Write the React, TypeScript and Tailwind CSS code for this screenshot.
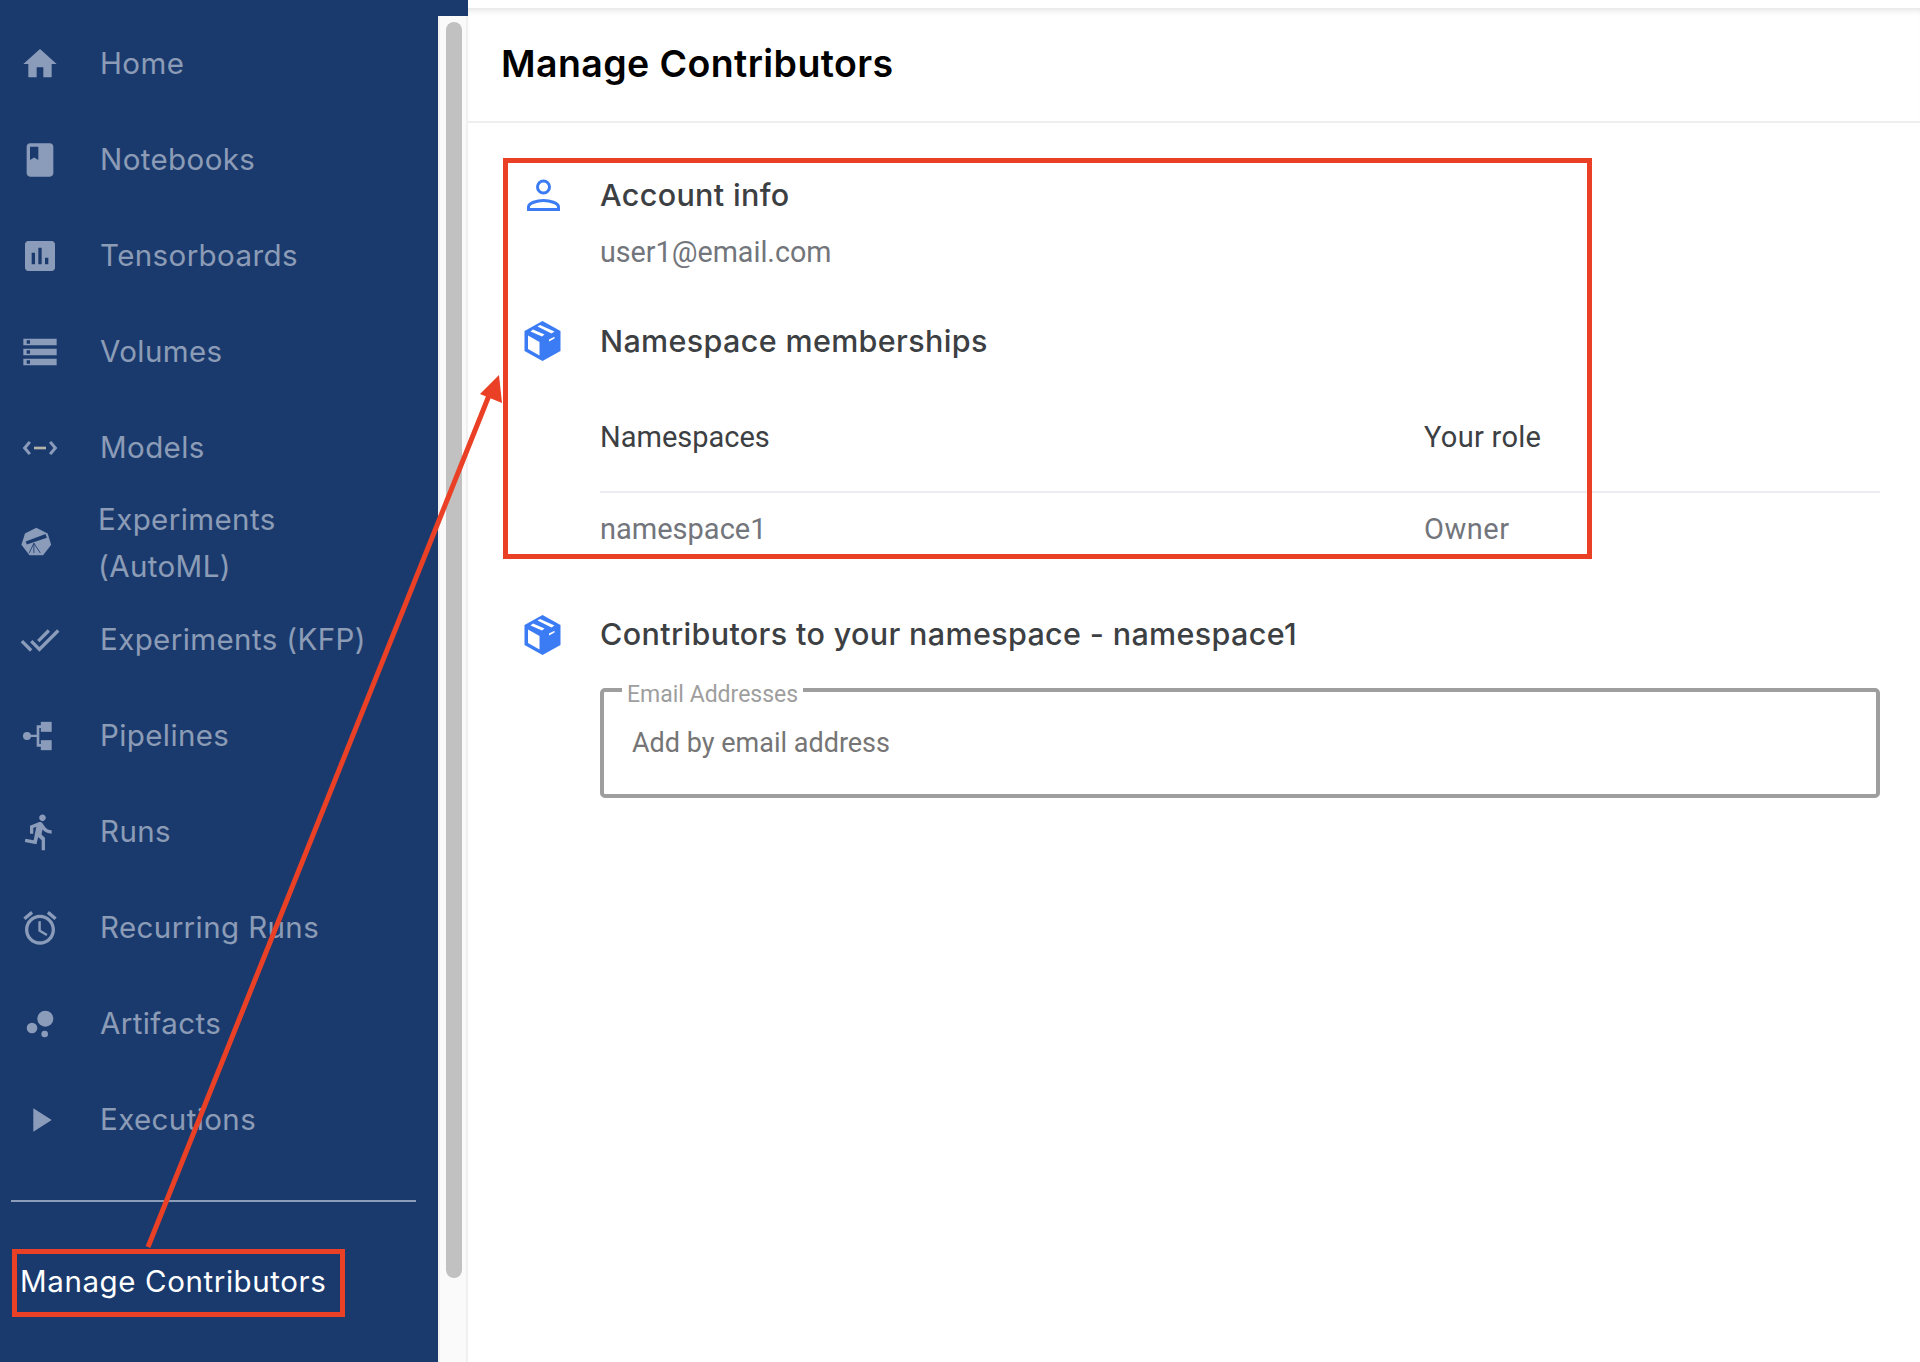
import type { ReactNode } from 'react';

const navItems: { label: ReactNode; icon: ReactNode; shift?: boolean }[] = [
  { label: 'Home', icon: <path d="M10 20v-6h4v6h5v-8h3L12 3 2 12h3v8z" /> },
  { label: 'Notebooks', icon: <path d="M18 2H6c-1.1 0-2 .9-2 2v16c0 1.1.9 2 2 2h12c1.1 0 2-.9 2-2V4c0-1.1-.9-2-2-2zM6 4h5v8l-2.5-1.5L6 12V4z" /> },
  { label: 'Tensorboards', icon: <path d="M19 3H5c-1.1 0-2 .9-2 2v14c0 1.1.9 2 2 2h14c1.1 0 2-.9 2-2V5c0-1.1-.9-2-2-2zM9 17H7v-7h2v7zm4 0h-2V7h2v10zm4 0h-2v-4h2v4z" /> },
  { label: 'Volumes', icon: <path d="M2 20h20v-4H2v4zm2-3h2v2H4v-2zM2 4v4h20V4H2zm4 3H4V5h2v2zm-4 7h20v-4H2v4zm2-3h2v2H4v-2z" /> },
  {
    label: 'Models',
    icon: (
      <>
        <path d="M6.6 8.8 5.2 7.8 1.6 12l3.6 4.2 1.4-1L4 12z" />
        <path d="M17.4 8.8l1.4-1 3.6 4.2-3.6 4.2-1.4-1L20 12z" />
        <rect x="8.4" y="11.2" width="7.2" height="1.6" fill="#b3b3a8" />
      </>
    ),
  },
  {
    label: (
      <>
        Experiments
        <br />
        (AutoML)
      </>
    ),
    shift: true,
    icon: (
      <>
        <path d="M11.5.5 19.5 4.5 22 12.5 16.3 20H6.7L1 12.5 3.5 4.5z" />
        <path d="M4 10.3 18 5l1 2.6L4.8 12.3z" fill="#1a3a6e" />
        <path d="M9.8 11.5v6.8M9.8 11.5 6.5 18.3M9.8 11.5l4.5 6.8" stroke="#1a3a6e" strokeWidth=".6" fill="none" />
      </>
    ),
  },
  { label: 'Experiments (KFP)', icon: <path d="M18 7l-1.41-1.41-6.34 6.34 1.41 1.41L18 7zm4.24-1.41L11.66 16.17 7.48 12l-1.41 1.41L11.66 19l12-12-1.42-1.41zM.41 13.41L6 19l1.41-1.41L1.83 12 .41 13.41z" /> },
  {
    label: 'Pipelines',
    icon: (
      <>
        <circle cx="4.2" cy="12" r="2.4" />
        <rect x="12.5" y="3.5" width="6.5" height="6" />
        <rect x="12.5" y="14.5" width="6.5" height="6" />
        <path d="M5 11.2h5V5.6h3v1.6h-1.4v9.6H13v1.6h-3v-5.8H5z" />
      </>
    ),
  },
  { label: 'Runs', icon: <path d="M13.49 5.48c1.1 0 2-.9 2-2s-.9-2-2-2-2 .9-2 2 .9 2 2 2zm-3.6 13.9l1-4.4 2.1 2v6h2v-7.5l-2.1-2 .6-3c1.3 1.5 3.3 2.5 5.5 2.5v-2c-1.9 0-3.5-1-4.3-2.4l-1-1.6c-.4-.6-1-1-1.7-1-.3 0-.5.1-.8.1l-5.2 2.2v4.7h2v-3.4l1.8-.7-1.6 8.1-4.9-1-.4 2 7 1.4z" /> },
  { label: 'Recurring Runs', icon: <path d="M22 5.72l-4.6-3.86-1.29 1.53 4.6 3.86L22 5.72zM7.88 3.39L6.6 1.86 2 5.71l1.29 1.53 4.59-3.85zM12.5 8H11v6l4.75 2.85.75-1.23-4-2.37V8zM12 4c-4.97 0-9 4.03-9 9s4.03 9 9 9 9-4.03 9-9-4.03-9-9-9zm0 16c-3.87 0-7-3.13-7-7s3.13-7 7-7 7 3.13 7 7-3.13 7-7 7z" /> },
  {
    label: 'Artifacts',
    icon: (
      <>
        <circle cx="7.2" cy="14.4" r="3.2" />
        <circle cx="14.8" cy="18" r="2" />
        <circle cx="15.2" cy="8.8" r="4.8" />
      </>
    ),
  },
  { label: 'Executions', icon: <path d="M8 5v14l11-7z" /> },
];

function CubeIcon() {
  return (
    <svg width="39" height="40" viewBox="0 0 36 40" fill="#3b7cf5">
      <path d="M18 0 36 10v20L18 40 0 30V10z" />
      <path d="M3.5 14.5 15 21v13.5L3.5 28z" fill="#fff" />
      <path d="M6 10.5 8.5 8.5 20 13.5l-2.5 2zM13 5.5 15.5 4 30 10.5 27 12.5z" fill="#fff" />
      <path d="M24.5 18.5 30 15.8v1.8l-5.5 2.9z" fill="#fff" />
    </svg>
  );
}

function PersonIcon() {
  return (
    <svg width="33" height="32" viewBox="0 0 33 32" fill="none" stroke="#3b7cf5" strokeWidth="3">
      <circle cx="16.5" cy="8" r="6" />
      <path d="M1.5 30.5V28c0-4 8.5-6.5 15-6.5s15 2.5 15 6.5v2.5z" />
    </svg>
  );
}

function SectionTitle({ children }: { children: ReactNode }) {
  return <h2 className="flex h-11 items-center text-[30.5px] font-medium tracking-[0.35px] text-[#3c4043]">{children}</h2>;
}

function App() {
  return (
    <div className="relative flex h-[1362px] w-[1920px] overflow-hidden bg-white font-['Inter',sans-serif]">
      <aside className="flex w-[468px] shrink-0 flex-col">
        <div className="h-4 bg-[#1a3a6e]" />
        <div className="flex flex-1">
          <nav className="flex w-[438px] flex-col bg-[#1a3a6e]">
            {navItems.map((item, i) => (
              <div key={i} className="flex h-24 shrink-0 items-center pl-5 text-[29.5px] leading-[47px] tracking-[0.4px] text-white/50">
                <svg
                  width={item.shift ? 34 : 40}
                  height={item.shift ? 34 : 40}
                  viewBox="0 0 24 24"
                  fill="#8b9cba"
                  className="shrink-0"
                >
                  {item.icon}
                </svg>
                <span className={item.shift ? 'mb-[2px] ml-11' : 'mb-[2px] ml-10'}>{item.label}</span>
              </div>
            ))}
            <div className="mx-[11px] mt-8 w-[405px] border-t-2 border-white/50" />
            <div className="mt-[56px] pl-5 text-[29.5px] leading-[47px] tracking-[0.6px] text-white">Manage Contributors</div>
          </nav>
          <div className="w-[30px] border-x-2 border-[#f0f0f0] bg-[#fafafa] pl-[6px] pt-[6px]">
            <div className="h-[1256px] w-4 rounded-full bg-[#c1c1c1]" />
          </div>
        </div>
      </aside>

      <main className="flex-1 pt-2">
        <header className="flex h-[115px] items-center border-b-2 border-[#eeeeee] pl-[33px] shadow-[inset_0_6px_6px_-4px_rgba(0,0,0,0.12)]">
          <h1 className="text-[37.5px] font-semibold tracking-[0.4px] text-black">Manage Contributors</h1>
        </header>

        <div className="pr-10 pt-[50px]">
          <section className="flex">
            <div className="w-[132px] shrink-0 pl-[59px] pt-[6px]">
              <PersonIcon />
            </div>
            <div className="flex-1">
              <SectionTitle>Account info</SectionTitle>
              <p className="mt-[15px] h-10 font-['Roboto',sans-serif] text-[28.7px] leading-10 text-[#72757b]">user1@email.com</p>
            </div>
          </section>

          <section className="mt-[47px] flex">
            <div className="w-[132px] shrink-0 pl-[55px] pt-[2px]">
              <CubeIcon />
            </div>
            <div className="flex-1">
              <SectionTitle>Namespace memberships</SectionTitle>
              <div className="mt-[54px] grid grid-cols-[824px_1fr] border-b-2 border-[#ebebf0] pb-[34px] font-['Roboto',sans-serif] text-[29px] leading-10 text-[#3c4043]">
                <span>Namespaces</span>
                <span className="tracking-[0.3px]">Your role</span>
              </div>
              <div className="mt-4 grid h-10 grid-cols-[824px_1fr] font-['Roboto',sans-serif] text-[29px] leading-10 text-[#72757b]">
                <span>namespace1</span>
                <span className="tracking-[0.5px]">Owner</span>
              </div>
            </div>
          </section>

          <section className="mt-[63px] flex">
            <div className="w-[132px] shrink-0 pl-[55px] pt-[3px]">
              <CubeIcon />
            </div>
            <div className="flex-1">
              <SectionTitle>Contributors to your namespace - namespace1</SectionTitle>
              <fieldset className="mt-[17px] h-[125px] rounded-[5px] border-4 border-[#9e9e9e] px-7 pb-0 pt-0">
                <legend className="-ml-[10px] px-[5px] pt-[10px] font-['Roboto',sans-serif] text-[23px] leading-6 text-[#9e9e9e]">Email Addresses</legend>
                <input
                  placeholder="Add by email address"
                  className="mt-[16px] w-full bg-transparent font-['Roboto',sans-serif] text-[27px] leading-10 outline-none placeholder:text-[#757575]"
                />
              </fieldset>
            </div>
          </section>
        </div>
      </main>

      {/* annotation overlay */}
      <div className="absolute left-[503px] top-[158px] h-[401px] w-[1089px] border-[5px] border-[#ea4025]" />
      <div className="absolute left-3 top-[1249px] h-[68px] w-[333px] border-[5px] border-[#ea4025]" />
      <svg className="pointer-events-none absolute left-0 top-0" width="1920" height="1362" fill="none">
        <path d="M148 1247 490 393" stroke="#ea4025" strokeWidth="5" />
        <path d="M499 375 502 403 480 394z" fill="#ea4025" />
      </svg>
    </div>
  );
}

export default App;
